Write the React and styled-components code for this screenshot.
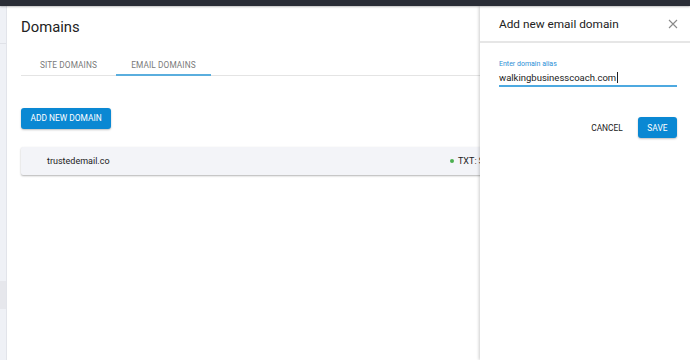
import React from 'react';
import styled, { createGlobalStyle } from 'styled-components';

const GlobalStyle = createGlobalStyle`
  html, body { margin: 0; padding: 0; height: 100%; }
  body { font-family: Roboto, "Liberation Sans", Arial, sans-serif; background: #fff; overflow: hidden; }
  #root { height: 100%; }
`;

const Page = styled.div`
  position: relative;
  display: flex;
  flex-direction: column;
  width: 690px;
  height: 360px;
  overflow: hidden;
`;

const TopBar = styled.div`
  height: 6px;
  flex: none;
  background: #2a2d36;
  box-shadow: 0 1px 2px rgba(0, 0, 0, 0.25);
  position: relative;
  z-index: 3;
`;

const Body = styled.div`
  flex: 1;
  display: flex;
  min-height: 0;
`;

const SideStrip = styled.div`
  width: 6px;
  flex: none;
  background: #eff1f6;
  border-right: 1px solid #e2e4ea;
  display: flex;
  flex-direction: column;
`;

const SideCell = styled.div`
  height: ${p => p.h}px;
  background: ${p => (p.dark ? '#e6e7ec' : 'transparent')};
  border-bottom: ${p => (p.line ? '1px solid #e0e2e8' : 'none')};
`;

const Main = styled.main`
  flex: 1;
  padding: 11px 21px 0 14px;
  display: flex;
  flex-direction: column;
`;

const Title = styled.h1`
  margin: 0;
  font-size: 14.8px;
  font-weight: 400;
  color: #222;
  line-height: 20px;
`;

const Tabs = styled.div`
  display: flex;
  margin-top: 18px;
  border-bottom: 1px solid #e4e4e4;
`;

const Tab = styled.div`
  width: 95px;
  height: 21px;
  display: flex;
  align-items: center;
  justify-content: center;
  font-size: 8.3px;
  letter-spacing: 0.1px;
  color: #7a7a7a;
  box-sizing: border-box;
  border-bottom: 2px solid ${p => (p.active ? '#5aaede' : 'transparent')};
  margin-bottom: -1px;
`;

const PrimaryButton = styled.button`
  border: 0;
  border-radius: 3px;
  background: #0a88d3;
  color: #fff;
  font-family: inherit;
  font-size: 8.4px;
  font-weight: 400;
  height: 21px;
  padding: 0 ${p => p.px || 9.5}px;
  box-shadow: 0 1px 2px rgba(0, 0, 0, 0.25);
`;

const AddRow = styled.div`
  margin-top: 30px;
`;

const DomainRow = styled.div`
  margin-top: 18px;
  height: 28px;
  background: #f3f4f8;
  border-radius: 2px;
  box-shadow: 0 1px 2px rgba(0, 0, 0, 0.3);
  display: flex;
  align-items: center;
  padding-left: 26px;
  font-size: 9px;
  color: #222;
`;

const DomainName = styled.div`
  flex: 1;
`;

const Status = styled.div`
  width: 222px;
  display: flex;
  align-items: center;
  gap: 4px;
  padding-left: 3px;
  box-sizing: border-box;
`;

const Dot = styled.span`
  width: 4px;
  height: 4px;
  border-radius: 50%;
  background: #4caf50;
`;

const Drawer = styled.aside`
  position: absolute;
  top: 6px;
  right: 0;
  bottom: 0;
  width: 210px;
  background: #fff;
  box-shadow: -1px 0 3px rgba(0, 0, 0, 0.2);
  display: flex;
  flex-direction: column;
  z-index: 2;
`;

const DrawerHeader = styled.div`
  height: 35px;
  display: flex;
  align-items: center;
  justify-content: space-between;
  padding: 0 12px 0 19px;
  border-bottom: 2px solid #e6e6e6;
`;

const DrawerTitle = styled.div`
  font-size: 11.8px;
  color: #222;
`;

const CloseIcon = styled.svg`
  width: 10px;
  height: 10px;
`;

const DrawerBody = styled.div`
  padding: 17px 13px 0 19px;
  display: flex;
  flex-direction: column;
`;

const FieldLabel = styled.label`
  font-size: 7px;
  color: #2a8fd6;
  line-height: 9px;
`;

const FieldInput = styled.div`
  display: flex;
  align-items: center;
  height: 18px;
  padding-top: 1px;
  box-sizing: border-box;
  font-size: 9.5px;
  color: #222;
  border-bottom: 2px solid #4da9e0;
`;

const Caret = styled.span`
  width: 1px;
  height: 11px;
  background: #222;
  margin-left: 0.5px;
`;

const Actions = styled.div`
  margin-top: 30px;
  display: flex;
  justify-content: flex-end;
  align-items: center;
  gap: 15px;
`;

const TextButton = styled.button`
  border: 0;
  background: transparent;
  font-family: inherit;
  font-size: 8.4px;
  font-weight: 400;
  color: #222;
  padding: 0;
`;

export default function App() {
  return (
    <>
      <GlobalStyle />
      <Page>
        <TopBar />
        <Body>
          <SideStrip>
            <SideCell h={37} line />
            <SideCell h={237} />
            <SideCell h={28} dark />
          </SideStrip>
          <Main>
            <Title>Domains</Title>
            <Tabs>
              <Tab>SITE DOMAINS</Tab>
              <Tab active>EMAIL DOMAINS</Tab>
            </Tabs>
            <AddRow>
              <PrimaryButton>ADD NEW DOMAIN</PrimaryButton>
            </AddRow>
            <DomainRow>
              <DomainName>trustedemail.co</DomainName>
              <Status>
                <Dot />
                <span>TXT: SPF verified</span>
              </Status>
            </DomainRow>
          </Main>
        </Body>
        <Drawer>
          <DrawerHeader>
            <DrawerTitle>Add new email domain</DrawerTitle>
            <CloseIcon viewBox="0 0 10 10">
              <path d="M1 1 L9 9 M9 1 L1 9" stroke="#8a8a8a" strokeWidth="1.1" fill="none" />
            </CloseIcon>
          </DrawerHeader>
          <DrawerBody>
            <FieldLabel>Enter domain alias</FieldLabel>
            <FieldInput>
              walkingbusinesscoach.com
              <Caret />
            </FieldInput>
            <Actions>
              <TextButton>CANCEL</TextButton>
              <PrimaryButton px={9.5}>SAVE</PrimaryButton>
            </Actions>
          </DrawerBody>
        </Drawer>
      </Page>
    </>
  );
}
